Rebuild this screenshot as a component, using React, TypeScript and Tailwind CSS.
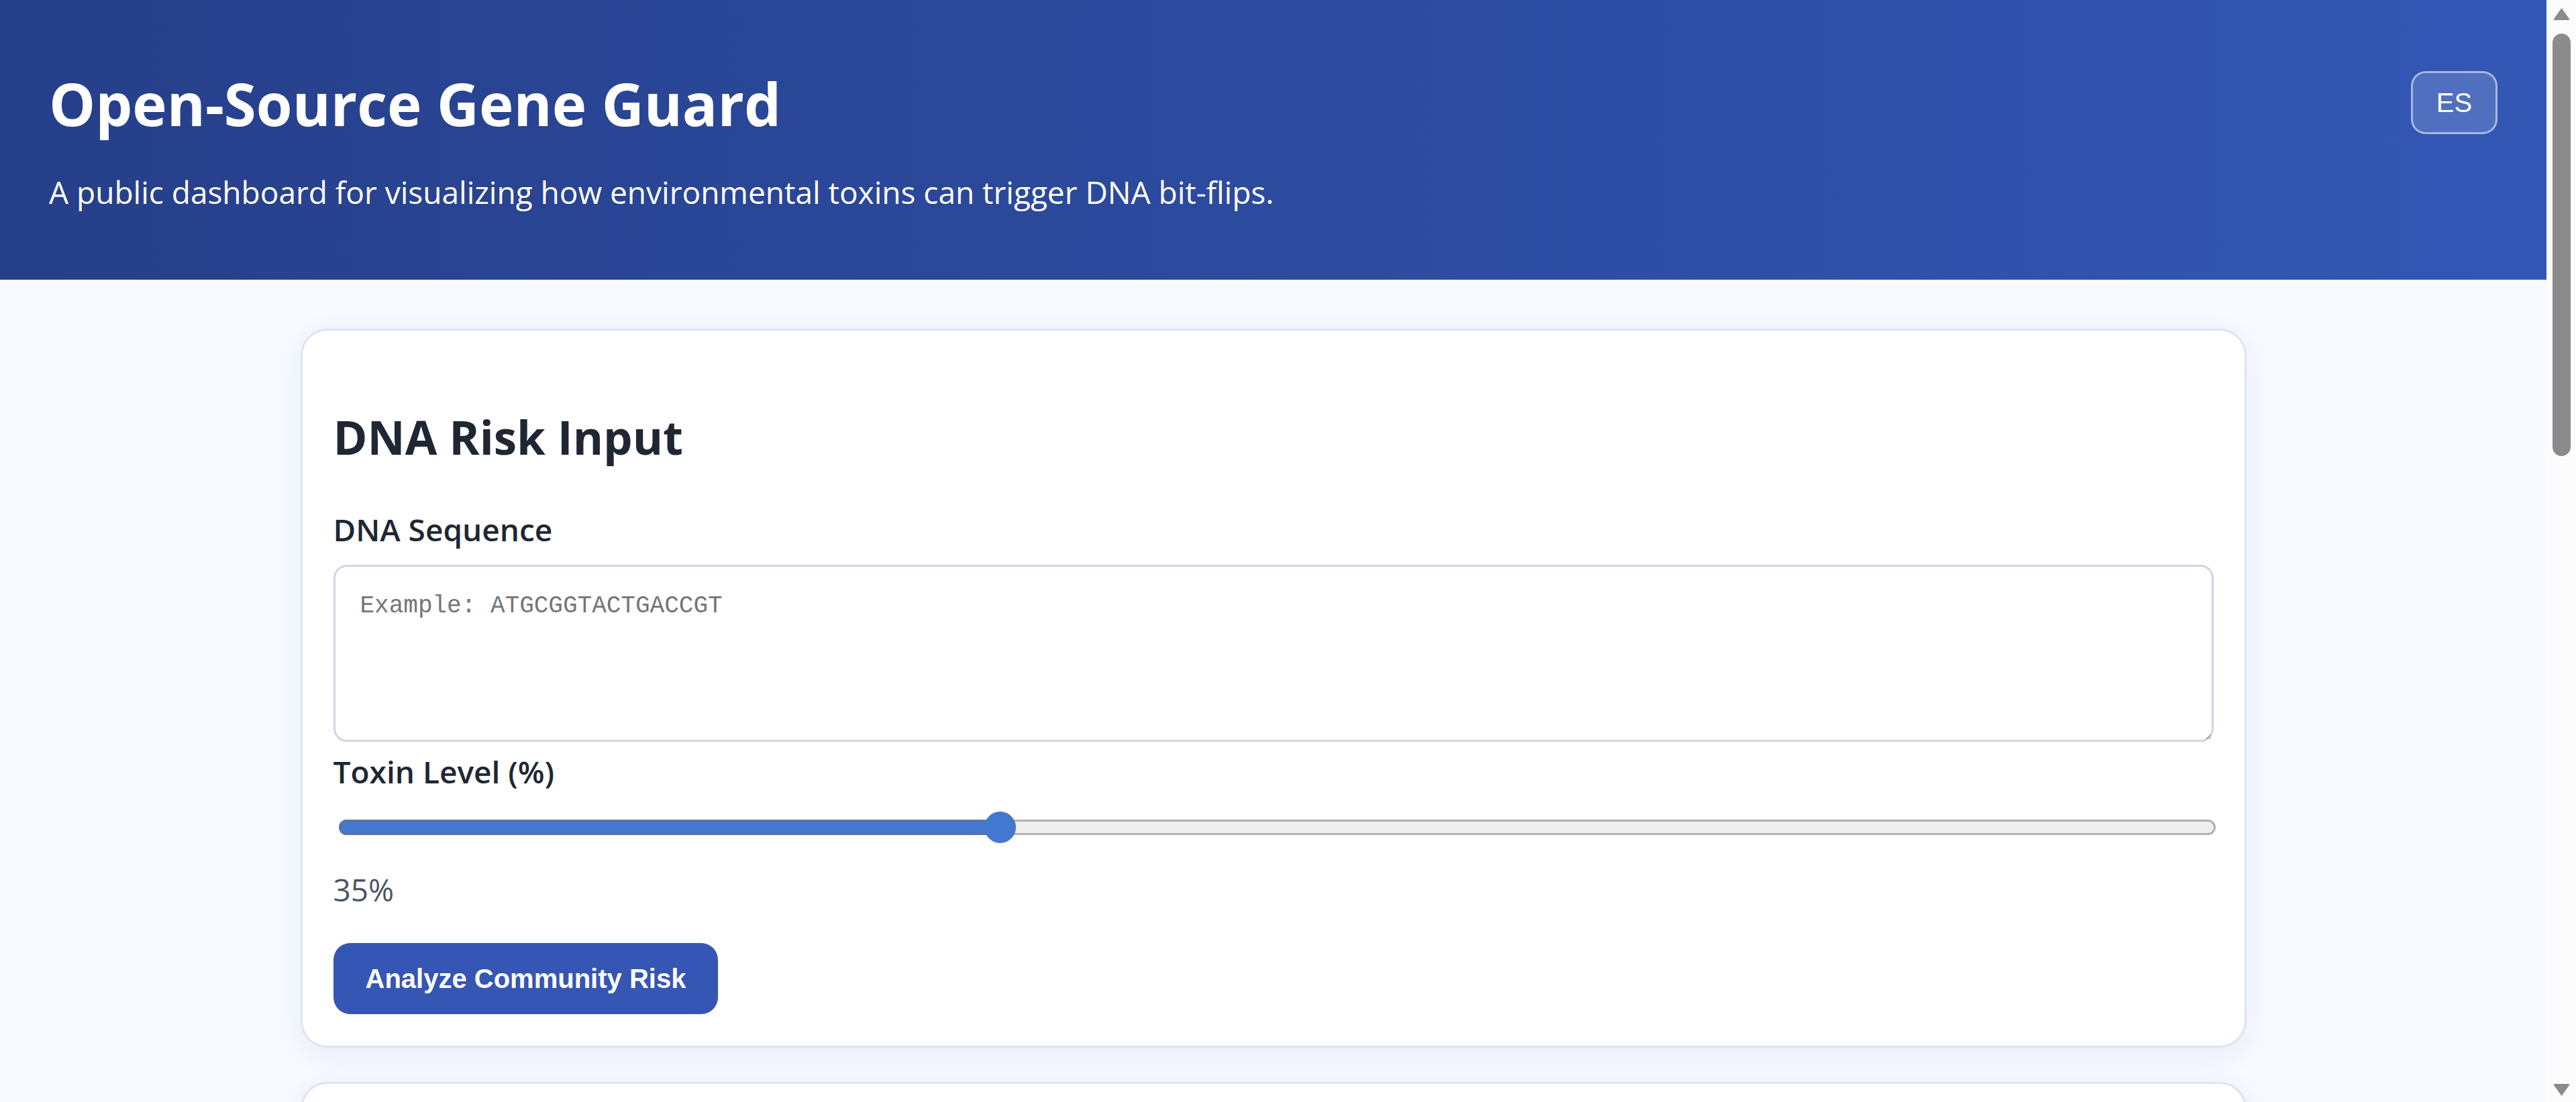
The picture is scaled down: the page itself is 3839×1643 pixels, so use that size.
import { useState } from "react";

const sans = "font-['Open_Sans','Noto_Sans',sans-serif]";

function Scrollbar() {
  return (
    <div className="flex h-full w-[44px] shrink-0 flex-col items-center bg-[#fcfcfc]">
      <svg className="mt-[10px] h-[21px] w-[27px]" viewBox="0 0 27 21">
        <path d="M13.5 2 L25 18 Q26 20 23 20 L4 20 Q1 20 2 18 Z" fill="#8b8b8b" />
      </svg>
      <div className="mt-[19px] h-[630px] w-[27px] rounded-full bg-[#8b8b8b]" />
      <div className="flex-1" />
      <svg className="mb-[7px] h-[21px] w-[27px]" viewBox="0 0 27 21">
        <path d="M13.5 19 L25 3 Q26 1 23 1 L4 1 Q1 1 2 3 Z" fill="#8b8b8b" />
      </svg>
    </div>
  );
}

function ToxinSlider({ value }: { value: number }) {
  return (
    <div className="relative ml-[8px] -mr-[3px] h-[47px]">
      <div className="absolute inset-x-0 top-[12px] h-[23px] rounded-full border-[3px] border-[#b2b2b2] bg-[#efefef]" />
      <div
        className="absolute left-0 top-[12px] h-[23px] rounded-l-full border-y-[3px] border-l-[3px] border-[#5a75a0] bg-[#4477cf]"
        style={{ width: `calc(${value}% - ${value * 0.47}px + 24px)` }}
      />
      <div
        className="absolute top-0 h-[47px] w-[47px] rounded-full bg-[#4477cf]"
        style={{ left: `calc(${value}% - ${value * 0.47}px)` }}
      />
    </div>
  );
}

export default function App() {
  const [toxin] = useState(35);

  return (
    <div className="flex h-[1643px] w-full overflow-hidden bg-[#f7faff]">
      <div className="flex min-w-0 flex-1 flex-col">
        <header className="flex h-[417px] shrink-0 items-start justify-between bg-linear-to-r from-[#263f8a] to-[#3357b5] px-[73px] pt-[102px]">
          <div className={sans}>
            <h1 className="text-[87px] font-bold leading-[1.2] text-white">Open-Source Gene Guard</h1>
            <p className="mt-[46px] text-[46px] leading-[1.5] text-white">
              A public dashboard for visualizing how environmental toxins can trigger DNA bit-flips.
            </p>
          </div>
          <button className="mt-[4px] flex h-[94px] w-[129px] items-center justify-center rounded-[22px] border-[3px] border-white/50 bg-white/15 font-['Liberation_Sans',Arial,sans-serif] text-[40px] text-white">
            ES
          </button>
        </header>

        <main className="flex flex-col items-center gap-[51px] pt-[73px]">
          <section
            className={`w-[2900px] rounded-[40px] border-[3px] border-[#dbe5f2] bg-white px-[46px] pb-[47px] pt-[117px] shadow-[0_10px_40px_rgba(37,64,138,0.08)] ${sans}`}
          >
            <h2 className="text-[69px] font-bold leading-[1.2] text-[#1f2733]">DNA Risk Input</h2>

            <label className="mt-[67px] block text-[46px] font-semibold leading-[1.3] text-[#1f2733]">
              DNA Sequence
            </label>
            <textarea
              className="mt-[22px] block h-[264px] w-full rounded-[20px] border-[3px] border-[#cdd6e4] bg-white px-[37px] py-[32px] font-['Liberation_Mono','DejaVu_Sans_Mono',monospace] text-[36px] leading-[1.5] text-[#1f2733] outline-none placeholder:text-[#757575]"
              placeholder="Example: ATGCGGTACTGACCGT"
            />

            <label className="mt-[15px] block text-[46px] font-semibold leading-[1.3] text-[#1f2733]">
              Toxin Level (%)
            </label>
            <div className="mt-[30px]">
              <ToxinSlider value={toxin} />
            </div>
            <p className="mt-[40px] text-[46px] leading-[1.3] text-[#4b5563]">{toxin}%</p>

            <button className="mt-[49px] flex h-[106px] items-center rounded-[25px] bg-[#3556b4] px-[48px] font-['Liberation_Sans',Arial,sans-serif] text-[40px] font-bold text-white">
              Analyze Community Risk
            </button>
          </section>

          <section className="h-[600px] w-[2900px] shrink-0 rounded-[40px] border-[3px] border-[#dbe5f2] bg-white shadow-[0_10px_40px_rgba(37,64,138,0.08)]" />
        </main>
      </div>
      <Scrollbar />
    </div>
  );
}
